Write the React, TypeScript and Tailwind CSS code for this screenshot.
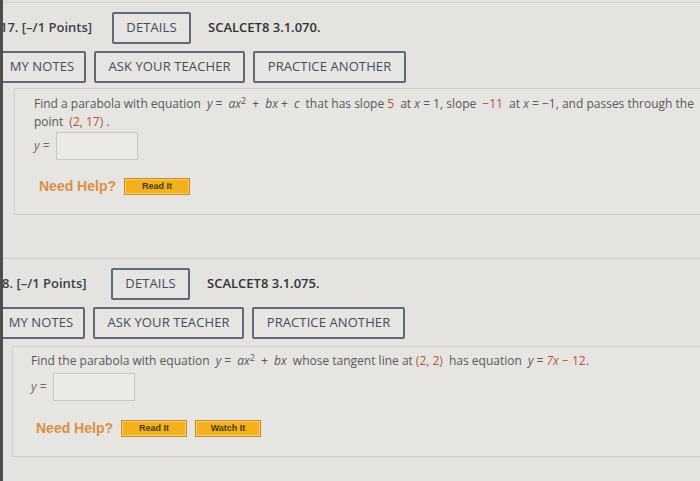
import React from "react";

const btn =
  "h-[32px] flex items-center justify-center whitespace-nowrap border-2 border-[#5d6a7b] rounded-[2px] bg-[#e6e5e1] text-[13px] font-medium text-[#3f4d61] tracking-[0.1px]";

const helpBtn =
  "h-[17px] w-[66px] flex items-center justify-center bg-[#f3b21d] border border-[#c98a22] shadow-[inset_0_0_0_1px_#f8cf6a] text-[9px] font-bold text-[#4a3912] font-['Liberation_Sans',Arial,sans-serif]";

function Header({
  num,
  code,
  shift,
  w,
}: {
  num: string;
  code: string;
  shift: string;
  w: string;
}) {
  return (
    <div className={`flex items-center h-[32px] ${shift}`}>
      <span className={`${w} text-[13px] font-semibold text-[#3b3f46] whitespace-nowrap`}>
        {num} [–/1 Points]
      </span>
      <div className={`${btn} w-[79px]`}>DETAILS</div>
      <span className="ml-[17px] text-[13px] font-semibold text-[#2f333a]">{code}</span>
    </div>
  );
}

function Actions({ shift }: { shift: string }) {
  return (
    <div className={`flex gap-[8px] ${shift}`}>
      <div className={`${btn} w-[88px]`}>MY NOTES</div>
      <div className={`${btn} w-[151px]`}>ASK YOUR TEACHER</div>
      <div className={`${btn} w-[153px]`}>PRACTICE ANOTHER</div>
    </div>
  );
}

function Red({ children }: { children: React.ReactNode }) {
  return <span className="text-[#b5533c] mx-[3px]">{children}</span>;
}

function Answer() {
  return (
    <div className="flex items-center gap-[6px]">
      <span className="text-[#6b6b6b]">
        <i>y</i> =
      </span>
      <div className="w-[82px] h-[28px] bg-[#ebeae7] border border-[#c9c8c4]" />
    </div>
  );
}

function NeedHelp({ watch }: { watch?: boolean }) {
  return (
    <div className="ml-[5px] flex items-center gap-[8px]">
      <span className="text-[14px] font-bold text-[#dc8f45] font-['Liberation_Sans',Arial,sans-serif]">
        Need Help?
      </span>
      <div className={helpBtn}>Read It</div>
      {watch && <div className={helpBtn}>Watch It</div>}
    </div>
  );
}

export default function App() {
  return (
    <div className="w-[700px] h-[481px] overflow-hidden bg-[#e4e3df] border-l-[3px] border-[#4d4d4d] font-['Open_Sans',sans-serif]">
      <div className="h-[3px] border-b border-[#d2d1cd]" />

      <div className="pt-[9px]">
        <Header num="17." code="SCALCET8 3.1.070." shift="ml-[-3px]" w="w-[112px]" />
      </div>
      <div className="pt-[7px]">
        <Actions shift="ml-[-5px]" />
      </div>

      <div className="mt-[5px] ml-[11px] h-[127px] border border-r-0 border-[#cfceca] bg-[#e6e5e2] pl-[19px] pt-[6px] text-[12px] leading-[18px] text-[#585858]">
        <p className="w-[665px]">
          Find a parabola with equation <i className="mx-[3px]">y</i>= <i className="ml-[3px]">ax</i>
          <sup className="text-[9px] mr-[3px]">2</sup> + <i className="mx-[3px]">bx</i>+{" "}
          <i className="mx-[3px]">c</i> that has slope
          <Red>5</Red> at <i>x</i> = 1, slope <Red>−11</Red> at <i>x</i> = −1, and passes
          through the point <Red>(2, 17)</Red>.
        </p>
        <div className="mt-[1px]">
          <Answer />
        </div>
        <div className="mt-[17px]">
          <NeedHelp />
        </div>
      </div>

      <div className="mt-[43px] border-t border-[#cfceca]" />

      <div className="pt-[9px]">
        <Header num="8." code="SCALCET8 3.1.075." shift="ml-[-1px]" w="w-[109px]" />
      </div>
      <div className="pt-[7px]">
        <Actions shift="ml-[-6px]" />
      </div>

      <div className="mt-[7px] ml-[9px] h-[111px] border border-r-0 border-[#cfceca] bg-[#e6e5e2] pl-[18px] pr-[8px] pt-[5px] text-[12px] leading-[18px] text-[#585858]">
        <p>
          Find the parabola with equation <i className="mx-[3px]">y</i>={" "}
          <i className="ml-[3px]">ax</i>
          <sup className="text-[9px] mr-[3px]">2</sup> + <i className="mx-[3px]">bx</i> whose
          tangent line at
          <Red>(2, 2)</Red> has equation <i className="mx-[3px]">y</i>={" "}
          <span className="text-[#b5533c]">
            <i>7x</i> − 12
          </span>
          .
        </p>
        <div className="mt-[3px]">
          <Answer />
        </div>
        <div className="mt-[18px]">
          <NeedHelp watch />
        </div>
      </div>
    </div>
  );
}
